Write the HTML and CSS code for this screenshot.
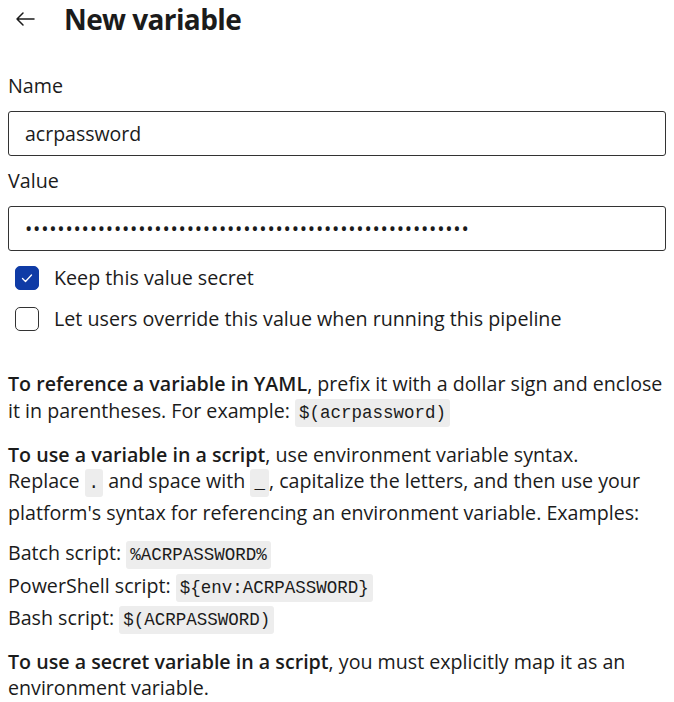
FILE: index.html
```html
<!DOCTYPE html>
<html lang="en">
<head>
<meta charset="utf-8">
<title>New variable</title>
<link rel="stylesheet" href="styles.css">
</head>
<body>
<header class="header">
  <button class="back" aria-label="Back">
    <svg width="20" height="16" viewBox="0 0 20 16" fill="none" stroke="#1b1b1b" stroke-width="1.5" stroke-linecap="round" stroke-linejoin="round"><path d="M19 8H2M8 2L2 8l6 6"/></svg>
  </button>
  <h1 class="title">New variable</h1>
</header>

<div class="field">
  <label class="label" for="name">Name</label>
  <input class="input" id="name" type="text" value="acrpassword">
</div>
<div class="field">
  <label class="label" for="value">Value</label>
  <input class="input pw" id="value" type="password" value="xxxxxxxxxxxxxxxxxxxxxxxxxxxxxxxxxxxxxxxxxxxxxxxxxxxxxxx">
</div>

<div class="checks">
  <label class="check">
    <span class="box checked">
      <svg width="14" height="14" viewBox="0 0 14 14" fill="none" stroke="#fff" stroke-width="1.3" stroke-linecap="round" stroke-linejoin="round"><path d="M2.5 7.5l3 3 6-6.5"/></svg>
    </span>
    <span>Keep this value secret</span>
  </label>
  <label class="check">
    <span class="box"></span>
    <span>Let users override this value when running this pipeline</span>
  </label>
</div>

<div class="help">
  <p class="p1"><strong>To reference a variable in YAML</strong>, prefix it with a dollar sign and enclose it in parentheses. For example: <code>$(acrpassword)</code></p>
  <p class="p2a"><strong>To use a variable in a script</strong>, use environment variable syntax.</p>
  <p class="p2b">Replace <code>.</code> and space with <code>_</code>, capitalize the letters, and then use your platform's syntax for referencing an environment variable. Examples:</p>
  <ul class="examples">
    <li>Batch script: <code>%ACRPASSWORD%</code></li>
    <li>PowerShell script: <code>${env:ACRPASSWORD}</code></li>
    <li>Bash script: <code>$(ACRPASSWORD)</code></li>
  </ul>
  <p class="p3"><strong>To use a secret variable in a script</strong>, you must explicitly map it as an environment variable.</p>
</div>
</body>
</html>
```

FILE: styles.css
```css
* { box-sizing: border-box; }
html, body { background: #fff; }
body {
  margin: 0;
  padding: 0 8px;
  font-family: "Open Sans", "Noto Sans", sans-serif;
  font-size: 19.7px;
  color: #1b1b1b;
}
.header {
  display: flex;
  align-items: center;
  height: 38px;
}
.back {
  border: 0;
  background: none;
  padding: 0;
  width: 56px;
  display: flex;
  align-items: center;
  justify-content: flex-start;
  padding-left: 7px;
}
.title {
  margin: 0;
  font-size: 28px;
  font-weight: 700;
  letter-spacing: -0.6px;
}
.field { display: flex; flex-direction: column; }
.field:first-of-type { margin-top: 35px; }
.label {
  line-height: 26px;
  margin-bottom: 12px;
}
.input {
  height: 45px;
  border: 1px solid #333;
  border-radius: 3px;
  padding: 0 16px;
  font: inherit;
  font-size: 19.5px;
  color: #1b1b1b;
  margin-bottom: 12px;
  outline: none;
}
.pw { letter-spacing: 0.75px; }
.checks {
  display: flex;
  flex-direction: column;
  gap: 17px;
  padding-left: 7px;
  margin-top: 3px;
}
.check {
  display: flex;
  align-items: center;
  gap: 15px;
  line-height: 24px;
}
.box {
  width: 24px;
  height: 24px;
  border: 1px solid #333;
  border-radius: 5px;
  display: flex;
  align-items: center;
  justify-content: center;
  flex: none;
}
.box.checked {
  background: #0f3ba6;
  border-color: #0f3ba6;
}
.help {
  margin-top: 39px;
  font-size: 19.65px;
}
.help p { margin: 0; }
strong { font-weight: 600; }
code {
  font-family: "Liberation Mono", "DejaVu Sans Mono", monospace;
  font-size: 17.5px;
  line-height: 1;
  background: #ededed;
  border-radius: 3px;
  padding: 4px 4px;
}
.p1 { line-height: 27px; }
.help .p2a { margin-top: 21px; line-height: 20px; }
.p2b { line-height: 32px; }
.examples {
  list-style: none;
  margin: 8px 0 0;
  padding: 0;
}
.examples li { line-height: 32.5px; }
.help .p3 { margin-top: 14px; line-height: 26px; }
```
